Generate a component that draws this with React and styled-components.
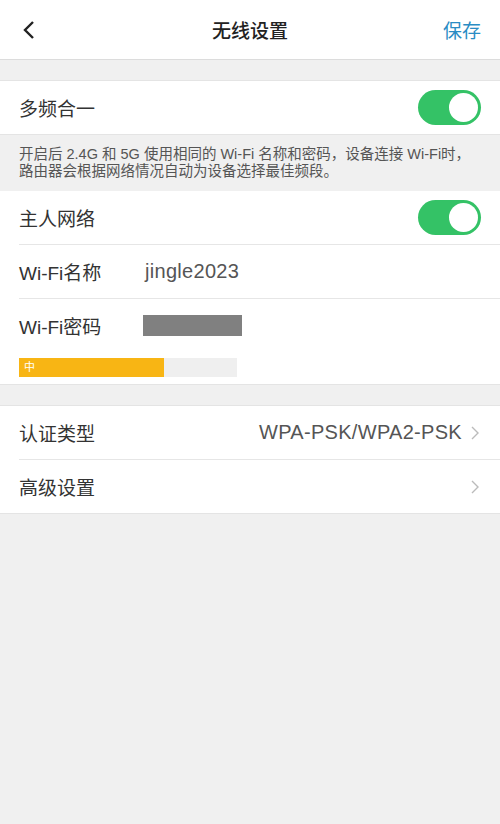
import React, { useState } from 'react'
import styled, { createGlobalStyle } from 'styled-components'

const GlobalStyle = createGlobalStyle`
  html, body {
    margin: 0;
    padding: 0;
    background: #f0f0f0;
    font-family: "Liberation Sans", "Noto Sans CJK SC", sans-serif;
    color: #333;
  }
`

const Page = styled.div`
  width: 500px;
  min-height: 824px;
  background: #f0f0f0;
`

const Header = styled.div`
  height: 59px;
  background: #fff;
  border-bottom: 1px solid #dcdcdc;
  display: grid;
  grid-template-columns: 80px 1fr 80px;
  align-items: center;
`

const BackButton = styled.div`
  padding-left: 22px;
  display: flex;
  align-items: center;
`

const Title = styled.div`
  text-align: center;
  font-size: 19px;
  font-weight: 500;
  color: #222;
`

const Save = styled.div`
  text-align: right;
  padding-right: 19px;
  font-size: 19px;
  color: #2a8cc4;
`

const Section = styled.div`
  background: #fff;
  margin-top: ${p => p.gap || 0}px;
  border-top: ${p => (p.gap ? '1px solid #e4e4e4' : 'none')};
  border-bottom: 1px solid #e4e4e4;
`

const Row = styled.div`
  height: 53px;
  margin-left: 19px;
  padding-right: 21px;
  display: flex;
  align-items: center;
  border-top: ${p => (p.divided ? '1px solid #e6e6e6' : 'none')};
`

const Label = styled.div`
  font-size: 19px;
  color: #333;
  width: 126px;
  flex-shrink: 0;
`

const Value = styled.div`
  flex: 1;
  font-size: 20px;
  letter-spacing: 0.3px;
  color: #555;
  text-align: ${p => (p.right ? 'right' : 'left')};
`

const Chevron = styled.span`
  margin-left: 9px;
  display: flex;
  align-items: center;
`

const Switch = styled.div`
  margin-left: auto;
  margin-right: -2px;
  width: 63px;
  height: 35px;
  border-radius: 18px;
  background: ${p => (p.on ? '#34c266' : '#ddd')};
  display: flex;
  align-items: center;
  justify-content: ${p => (p.on ? 'flex-end' : 'flex-start')};
  padding: 0 3px;
  box-sizing: border-box;
  cursor: pointer;
`

const Knob = styled.div`
  width: 29px;
  height: 29px;
  border-radius: 50%;
  background: #fff;
`

const Note = styled.div`
  padding: 11px 19px 11px 19px;
  font-size: 14.5px;
  line-height: 17px;
  color: #555;
`

const Masked = styled.div`
  width: 99px;
  height: 21px;
  margin-left: -2px;
  background: #808080;
`

const StrengthRow = styled.div`
  padding: 6px 19px 7px;
  display: flex;
`

const StrengthBar = styled.div`
  width: 218px;
  height: 19px;
  background: #efefef;
  display: flex;
`

const StrengthFill = styled.div`
  background: #f8b514;
  color: #fff;
  font-size: 11px;
  line-height: 19px;
  padding-left: 5px;
  box-sizing: border-box;
`

const ChevronIcon = () => (
  <svg width="8" height="14" viewBox="0 0 8 14">
    <path d="M1 1l6 6-6 6" fill="none" stroke="#bbb" strokeWidth="1.4" />
  </svg>
)

const Toggle = ({ initial }) => {
  const [on, setOn] = useState(initial)
  return (
    <Switch on={on} onClick={() => setOn(!on)}>
      <Knob />
    </Switch>
  )
}

export default function App() {
  return (
    <Page>
      <GlobalStyle />
      <Header>
        <BackButton>
          <svg width="14" height="20" viewBox="0 0 14 20">
            <path d="M11 2L3 10l8 8" fill="none" stroke="#222" strokeWidth="2.4" />
          </svg>
        </BackButton>
        <Title>无线设置</Title>
        <Save>保存</Save>
      </Header>

      <Section gap={20}>
        <Row>
          <Label>多频合一</Label>
          <Toggle initial />
        </Row>
      </Section>
      <Note>
        开启后 2.4G 和 5G 使用相同的 Wi-Fi 名称和密码，设备连接 Wi-Fi时，
        <br />
        路由器会根据网络情况自动为设备选择最佳频段。
      </Note>

      <Section>
        <Row>
          <Label>主人网络</Label>
          <Toggle initial />
        </Row>
        <Row divided>
          <Label>Wi-Fi名称</Label>
          <Value>jingle2023</Value>
        </Row>
        <Row divided>
          <Label>Wi-Fi密码</Label>
          <Masked />
        </Row>
        <StrengthRow>
          <StrengthBar>
            <StrengthFill style={{ width: '145px' }}>中</StrengthFill>
          </StrengthBar>
        </StrengthRow>
      </Section>

      <Section gap={20}>
        <Row>
          <Label>认证类型</Label>
          <Value right>WPA-PSK/WPA2-PSK</Value>
          <Chevron><ChevronIcon /></Chevron>
        </Row>
        <Row divided>
          <Label>高级设置</Label>
          <Value right />
          <Chevron><ChevronIcon /></Chevron>
        </Row>
      </Section>
    </Page>
  )
}
